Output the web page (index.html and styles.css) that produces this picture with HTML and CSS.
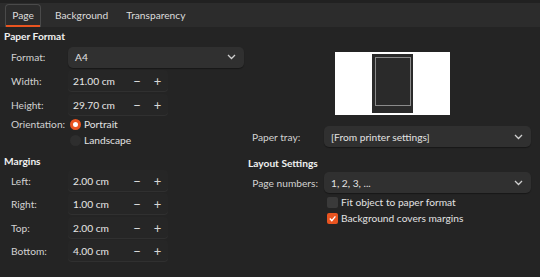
FILE: index.html
```html
<!DOCTYPE html>
<html>
<head>
<meta charset="utf-8">
<link rel="stylesheet" href="styles.css">
</head>
<body>
<div class="tabs">
  <div class="tab active">Page</div>
  <div class="tab t-bg">Background</div>
  <div class="tab t-tr">Transparency</div>
</div>
<div class="content">
  <div class="col left">
    <div class="title">Paper Format</div>
    <div class="row r-format">
      <span class="lbl">Format:</span>
      <div class="combo wide"><span>A4</span><svg class="chev" width="9" height="6" viewBox="0 0 9 6"><path d="M1 1l3.5 3.5L8 1" fill="none" stroke="#cfcfcf" stroke-width="1.3"/></svg></div>
    </div>
    <div class="row spin-row">
      <span class="lbl">Width:</span>
      <div class="spin"><span class="val">21.00 cm</span><span class="btn">−</span><span class="btn">+</span></div>
    </div>
    <div class="row spin-row">
      <span class="lbl">Height:</span>
      <div class="spin"><span class="val">29.70 cm</span><span class="btn">−</span><span class="btn">+</span></div>
    </div>
    <div class="row radio-row">
      <span class="lbl">Orientation:</span>
      <span class="radio on"></span><span class="opt">Portrait</span>
    </div>
    <div class="row radio-row">
      <span class="lbl"></span>
      <span class="radio"></span><span class="opt">Landscape</span>
    </div>
    <div class="title t2">Margins</div>
    <div class="row spin-row m first">
      <span class="lbl">Left:</span>
      <div class="spin"><span class="val">2.00 cm</span><span class="btn">−</span><span class="btn">+</span></div>
    </div>
    <div class="row spin-row m">
      <span class="lbl">Right:</span>
      <div class="spin"><span class="val">1.00 cm</span><span class="btn">−</span><span class="btn">+</span></div>
    </div>
    <div class="row spin-row m mt">
      <span class="lbl">Top:</span>
      <div class="spin"><span class="val">2.00 cm</span><span class="btn">−</span><span class="btn">+</span></div>
    </div>
    <div class="row spin-row m">
      <span class="lbl">Bottom:</span>
      <div class="spin"><span class="val">4.00 cm</span><span class="btn">−</span><span class="btn">+</span></div>
    </div>
  </div>
  <div class="col right">
    <div class="preview-wrap">
      <div class="preview"><div class="page"><div class="page-inner"></div></div></div>
    </div>
    <div class="row rrow tray">
      <span class="rlbl left-al">Paper tray:</span>
      <div class="combo full"><span>[From printer settings]</span><svg class="chev" width="9" height="6" viewBox="0 0 9 6"><path d="M1 1l3.5 3.5L8 1" fill="none" stroke="#cfcfcf" stroke-width="1.3"/></svg></div>
    </div>
    <div class="title t3">Layout Settings</div>
    <div class="row rrow">
      <span class="rlbl">Page numbers:</span>
      <div class="combo full"><span>1, 2, 3, ...</span><svg class="chev" width="9" height="6" viewBox="0 0 9 6"><path d="M1 1l3.5 3.5L8 1" fill="none" stroke="#cfcfcf" stroke-width="1.3"/></svg></div>
    </div>
    <div class="row check-row c1">
      <span class="check"></span><span class="opt">Fit object to paper format</span>
    </div>
    <div class="row check-row">
      <span class="check on"><svg width="9" height="9" viewBox="0 0 9 9"><path d="M1.8 4.6l2 2 3.6-4.2" fill="none" stroke="#fff" stroke-width="1.4"/></svg></span><span class="opt">Background covers margins</span>
    </div>
  </div>
</div>
</body>
</html>
```
FILE: styles.css
```css
html, body {
  margin: 0;
  padding: 0;
  background: #242424;
  width: 540px;
  height: 277px;
  overflow: hidden;
}
body {
  font-family: "Lato", "Liberation Sans", sans-serif;
  font-size: 10.2px;
  color: #dedede;
  white-space: nowrap;
}
.tabs {
  height: 24px;
  border-top: 3px solid #212121;
  background: #2c2c2c;
  display: flex;
  align-items: stretch;
  padding-left: 5px;
}
.tab {
  margin-top: 1px;
  line-height: 21px;
  color: #dcdcdc;
  border-radius: 4px 4px 0 0;
  border: 1px solid transparent;
  border-bottom: none;
}
.tab.active {
  border-color: #4a4a4a;
  width: 34px;
  text-align: center;
  box-shadow: inset 0 -2px 0 #e95420;
}
.t-bg { margin-left: 13px; }
.t-tr { margin-left: 16px; }
.content {
  display: grid;
  grid-template-columns: 248px 292px;
}
.col { display: flex; flex-direction: column; }
.title {
  font-weight: bold;
  color: #f0f0f0;
  height: 19px;
  line-height: 19px;
  padding-left: 4px;
}
.t2 { margin-top: 5px; height: 17px; line-height: 17px; }
.row {
  display: flex;
  align-items: center;
}
.lbl {
  width: 57px;
  padding-left: 11px;
  color: #d2d2d2;
  flex: none;
}
.r-format { height: 22px; }
.combo {
  height: 21px;
  background: #303030;
  border-radius: 5px;
  box-shadow: 0 1px 1px rgba(0,0,0,0.35);
  display: flex;
  align-items: center;
  justify-content: space-between;
  padding: 0 8px 0 7px;
  box-sizing: border-box;
  color: #e2e2e2;
}
.combo.wide { width: 176px; }
.combo.full { width: 207px; }
.chev { flex: none; }
.spin-row { height: 22px; margin-top: 2px; }
.spin-row.m { margin-top: 1px; }
.spin-row.mt { margin-top: 2px; }
.spin-row.first { margin-top: 0; }
.spin {
  width: 100px;
  height: 22px;
  display: flex;
  align-items: center;
  background: #262626;
  border-radius: 4px;
  box-shadow: inset 0 -1px 0 #303030;
  box-sizing: border-box;
  padding-left: 5px;
}
.val { width: 57px; color: #e6e6e6; }
.btn {
  width: 22px;
  text-align: center;
  font-size: 13px;
  color: #d8d8d8;
}
.radio-row { height: 16px; }
.radio {
  width: 11px;
  height: 11px;
  border-radius: 50%;
  background: #2e2e2e;
  margin-left: 2px;
  margin-right: 3px;
  box-sizing: border-box;
  flex: none;
}
.radio.on {
  border: 3.5px solid #e95420;
  background: #fff;
}
.opt { color: #e2e2e2; }
.preview-wrap {
  display: flex;
  padding-left: 87px;
  margin-top: 25px;
  height: 63px;
}
.preview {
  width: 115px;
  height: 63px;
  background: #fff;
  display: flex;
  justify-content: center;
  align-items: flex-start;
  padding-top: 2px;
  box-sizing: border-box;
  padding-right: 1px;
}
.page {
  width: 41px;
  height: 59px;
  background: #2a2a2a;
  box-sizing: border-box;
  padding: 3px 1px 0 3px;
}
.page-inner {
  width: 36px;
  height: 49px;
  border: 1px solid #8a8a8a;
  box-sizing: border-box;
}
.rrow { height: 21px; }
.tray { margin-top: 11px; }
.rlbl {
  width: 70px;
  text-align: right;
  padding-right: 6px;
  color: #d2d2d2;
  flex: none;
}
.rlbl.left-al {
  text-align: left;
  width: 72px;
  padding-left: 4px;
  padding-right: 0;
}
.t3 { margin-top: 8px; padding-left: 0; height: 17px; line-height: 17px; }
.check-row { height: 16px; padding-left: 79px; }
.c1 { margin-top: 1px; }
.check {
  width: 11px;
  height: 11px;
  border-radius: 2px;
  background: #3a3a3a;
  margin-right: 3px;
  flex: none;
  display: flex;
  align-items: center;
  justify-content: center;
}
.check.on { background: #e95420; }
```
